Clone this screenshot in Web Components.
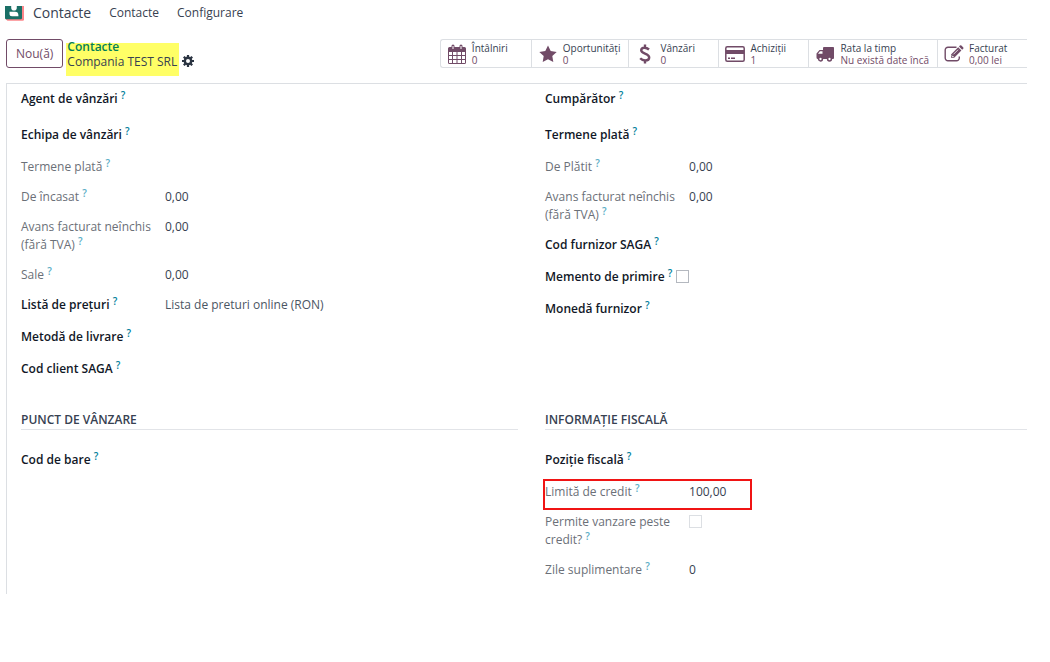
<!DOCTYPE html>
<html lang="ro">
<head>
<meta charset="utf-8">
<meta name="viewport" content="width=device-width, initial-scale=1">
<title>Contacte</title>
<style>
  body {
    margin: 0;
    background: #fff;
    color: #374151;
    font-family: "Open Sans", "Noto Sans", sans-serif;
    font-size: 12px;
    line-height: 18px;
  }
</style>
</head>
<body>
<contact-page>
  <app-navbar slot="nav" brand="Contacte">
    <a href="#contacte">Contacte</a>
    <a href="#configurare">Configurare</a>
  </app-navbar>

  <record-breadcrumb slot="control" parent="Contacte" current="Compania TEST SRL"></record-breadcrumb>
  <stat-bar slot="control">
    <stat-button icon="calendar" label="Întâlniri" value="0"></stat-button>
    <stat-button icon="star" label="Oportunități" value="0"></stat-button>
    <stat-button icon="dollar" label="Vânzări" value="0"></stat-button>
    <stat-button icon="card" label="Achiziții" value="1"></stat-button>
    <stat-button icon="truck" label="Rata la timp" value="Nu există date încă"></stat-button>
    <stat-button icon="edit" label="Facturat" value="0,00 lei"></stat-button>
  </stat-bar>

  <field-group>
    <form-field tall type="text" label="Agent de vânzări"></form-field>
    <form-field type="text" label="Echipa de vânzări"></form-field>
    <form-field label="Termene plată"></form-field>
    <form-field label="De încasat" value="0,00"></form-field>
    <form-field label="Avans facturat neînchis (fără TVA)" value="0,00"></form-field>
    <form-field label="Sale" value="0,00"></form-field>
    <form-field type="text" label="Listă de prețuri" value="Lista de preturi online (RON)"></form-field>
    <form-field type="text" label="Metodă de livrare"></form-field>
    <form-field type="text" label="Cod client SAGA"></form-field>
  </field-group>

  <field-group>
    <form-field tall type="text" label="Cumpărător"></form-field>
    <form-field type="text" label="Termene plată"></form-field>
    <form-field label="De Plătit" value="0,00"></form-field>
    <form-field label="Avans facturat neînchis (fără TVA)" value="0,00"></form-field>
    <form-field type="text" label="Cod furnizor SAGA"></form-field>
    <form-field inline type="checkbox" label="Memento de primire"></form-field>
    <form-field type="text" label="Monedă furnizor"></form-field>
  </field-group>

  <field-group heading="Punct de vânzare">
    <form-field type="text" label="Cod de bare"></form-field>
  </field-group>

  <field-group heading="Informație fiscală">
    <form-field type="text" label="Poziție fiscală"></form-field>
    <form-field marked label="Limită de credit" value="100,00"></form-field>
    <form-field disabled type="checkbox" label="Permite vanzare peste credit?"></form-field>
    <form-field label="Zile suplimentare" value="0"></form-field>
  </field-group>
</contact-page>

<script>
const ICONS = {
  calendar: `<svg viewBox="0 0 18 20" width="18" height="20">
    <path fill="currentColor" fill-rule="evenodd" d="M1.500 3H3.500V2a1.500 1.500 0 0 1 3 0v1h5V2a1.500 1.500 0 0 1 3 0v1h2A1.500 1.500 0 0 1 18 4.500v14a1.500 1.500 0 0 1-1.500 1.500h-15A1.500 1.500 0 0 1 0 18.500v-14A1.500 1.500 0 0 1 1.500 3zM1 8v3h3V8zm4 0v3h3.500V8zm4.500 0v3H13V8zM14 8v3h3V8zM1 12v3h3v-3zm4 0v3h3.500v-3zm4.500 0v3H13v-3zm4.500 0v3h3v-3zM1 16v3h3v-3zm4 0v3h3.500v-3zm4.500 0v3H13v-3zm4.500 0v3h3v-3z"/>
    <path stroke="#fff" stroke-width="1" d="M5 2v3M13 2v3"/></svg>`,
  star: `<svg viewBox="0 0 18 18" width="18" height="18">
    <path fill="currentColor" d="M9 .5l2.700 5.500 6 .9-4.400 4.200 1 6L9 14.300l-5.300 2.800 1-6L.3 6.900l6-.9z"/></svg>`,
  dollar: `<svg viewBox="0 0 12 20" width="12" height="20">
    <path fill="none" stroke="currentColor" stroke-width="2.400" d="M10 5.500C8.500 4.200 7 3.700 5.600 3.700 3.500 3.700 2.200 4.800 2.200 6.300c0 3.900 8 2.800 8 7.200 0 1.800-1.600 3-4 3-1.900 0-3.600-.7-5-2.200M6 .5v3.200M6 16.500v3"/></svg>`,
  card: `<svg viewBox="0 0 20 16" width="20" height="16">
    <rect x=".8" y=".8" width="18.400" height="14.400" rx="1.500" fill="none" stroke="currentColor" stroke-width="1.500"/>
    <path fill="currentColor" d="M1 4h18v4H1zM3 11.500h2V13H3zM6 11.500h4V13H6z"/></svg>`,
  truck: `<svg viewBox="0 0 18 16" width="18" height="16">
    <path fill="currentColor" fill-rule="evenodd" d="M8 1h9.200a.8.8 0 0 1 .8.8V12a1 1 0 0 1-1 1H8V13H2a1.500 1.500 0 0 1-1.500-1.500V7.500L3.500 4H7V2a1 1 0 0 1 1-1zM4 5.200L2 7.800h4.500V5.200z"/>
    <g fill="#fff" stroke="currentColor" stroke-width="1.500"><circle cx="4.500" cy="13" r="1.900"/><circle cx="13.500" cy="13" r="1.900"/></g></svg>`,
  edit: `<svg viewBox="0 0 20 18" width="20" height="18">
    <path fill="none" stroke="currentColor" stroke-width="1.400" d="M12.500 2.200H4A2.800 2.800 0 0 0 1.200 5v8A2.800 2.800 0 0 0 4 15.800h8.500a2.800 2.800 0 0 0 2.800-2.800v-1.500"/>
    <path fill="currentColor" d="M14.200 2.300l3.200 3.200-7.200 7.200H7V9.500zM15 1.500l.9-.9a1 1 0 0 1 1.500 0l1.700 1.700a1 1 0 0 1 0 1.500l-.9.9z"/>
    <path stroke="#fff" stroke-width=".8" d="M9.500 9.300l4.600-4.600M8 9.800v1.700h1.800"/></svg>`,
  gear: `<svg viewBox="0 0 12 12" width="12" height="12">
    <circle cx="6" cy="6" r="3.200" fill="none" stroke="currentColor" stroke-width="2.400"/>
    <path stroke="currentColor" stroke-width="2.200" d="M6 0v2.500M6 9.500V12M0 6h2.500M9.500 6H12M1.800 1.800l1.600 1.600M8.600 8.600l1.600 1.600M10.200 1.800L8.600 3.400M3.400 8.600l-1.600 1.600"/></svg>`,
  app: `<svg viewBox="0 0 20 15" width="20" height="15">
    <path fill="#fc868b" d="M16 0h3v13.500a1.300 1.300 0 0 1-1.300 1.300H2.500L.5 13z"/>
    <path fill="#1a6f66" d="M0 0h17v12a1.200 1.200 0 0 1-1.200 1.200H1.200A1.200 1.200 0 0 1 0 12z"/>
    <path fill="#fff" d="M6.200 0h5.600v1.800a2.800 2.800 0 0 1-5.600 0z"/>
    <path fill="#fff" d="M4.500 5.800H10a3.400 3.400 0 0 1 3.400 3.400v1H7a2.500 2.500 0 0 1-2.500-2.500z"/></svg>`
};

class AppNavbar extends HTMLElement {
  constructor() {
    super();
    this.attachShadow({ mode: 'open' });
  }

  connectedCallback() {
    this.shadowRoot.innerHTML = `
      <style>
        :host { display: block; }
        nav { display: flex; align-items: center; height: 26px; padding-left: 5px; color: #374151; }
        .brand { display: flex; align-items: center; gap: 8px; margin-right: 18px; font-size: 14px; color: inherit; text-decoration: none; }
        .menu { display: flex; gap: 18px; }
        ::slotted(a) { color: inherit; text-decoration: none; }
      </style>
      <nav>
        <a class="brand" href="#">${ICONS.app}<span>${this.getAttribute('brand')}</span></a>
        <div class="menu"><slot></slot></div>
      </nav>
    `;
  }
}

class RecordBreadcrumb extends HTMLElement {
  constructor() {
    super();
    this.attachShadow({ mode: 'open' });
  }

  connectedCallback() {
    this.shadowRoot.innerHTML = `
      <style>
        :host { display: flex; align-items: flex-start; gap: 3px; }
        button { font: inherit; cursor: pointer; }
        .new {
          height: 29px;
          padding: 0 9px;
          border: 1px solid #714b67;
          border-radius: 3px;
          background: #fff;
          color: #714b67;
          font-weight: 500;
        }
        .trail {
          margin-top: 4px;
          height: 33px;
          padding: 0 2px 0 1px;
          background: #ffff66;
          line-height: 15px;
        }
        .trail a { display: block; margin-top: -4px; color: #017e58; font-weight: 600; text-decoration: none; }
        .trail span { display: block; }
        .gear { display: flex; margin-top: 16px; padding: 0; border: 0; background: none; color: #2b3442; }
      </style>
      <button class="new" type="button">Nou(ă)</button>
      <div class="trail">
        <a href="#">${this.getAttribute('parent')}</a>
        <span>${this.getAttribute('current')}</span>
      </div>
      <button class="gear" type="button" aria-label="Acțiuni">${ICONS.gear}</button>
    `;
  }
}

class StatBar extends HTMLElement {
  constructor() {
    super();
    this.attachShadow({ mode: 'open' });
    this.shadowRoot.innerHTML = `
      <style>
        :host {
          display: flex;
          box-sizing: border-box;
          height: 29px;
          border: 1px solid #dcdfe3;
          border-right: 0;
          border-radius: 3px 0 0 3px;
        }
      </style>
      <slot></slot>
    `;
  }
}

class StatButton extends HTMLElement {
  constructor() {
    super();
    this.attachShadow({ mode: 'open' });
  }

  connectedCallback() {
    this.shadowRoot.innerHTML = `
      <style>
        :host { display: flex; min-width: 90px; box-sizing: border-box; }
        :host(:not(:first-child)) { border-left: 1px solid #dcdfe3; }
        button {
          display: flex;
          align-items: center;
          gap: 4px;
          width: 100%;
          padding: 0 8px 0 5px;
          border: 0;
          background: none;
          color: #714b67;
          font: inherit;
          font-size: 10px;
          line-height: 12px;
          text-align: left;
          white-space: nowrap;
          cursor: pointer;
        }
        .icon { display: flex; justify-content: center; width: 22px; }
        .text { display: flex; flex-direction: column; }
        .label { color: #374151; }
      </style>
      <button type="button">
        <span class="icon">${ICONS[this.getAttribute('icon')]}</span>
        <span class="text">
          <span class="label">${this.getAttribute('label')}</span>
          <span>${this.getAttribute('value')}</span>
        </span>
      </button>
    `;
  }
}

class FieldGroup extends HTMLElement {
  constructor() {
    super();
    this.attachShadow({ mode: 'open' });
  }

  connectedCallback() {
    const heading = this.getAttribute('heading');
    this.shadowRoot.innerHTML = `
      <style>
        :host { display: block; }
        h2 {
          margin: 0 0 21px;
          border-bottom: 1px solid #e2e4e8;
          color: #374151;
          font-size: 12px;
          font-weight: 600;
          text-transform: uppercase;
        }
        .fields { display: flex; flex-direction: column; gap: 12px; }
      </style>
      ${heading ? `<h2>${heading}</h2>` : ''}
      <div class="fields"><slot></slot></div>
    `;
  }
}

class FormField extends HTMLElement {
  constructor() {
    super();
    this.attachShadow({ mode: 'open' });
  }

  control() {
    const type = this.getAttribute('type');
    const value = this.getAttribute('value') || '';
    if (type === 'checkbox') {
      return `<input id="field" type="checkbox" ${this.hasAttribute('disabled') ? 'disabled' : ''}>`;
    }
    if (type === 'text') {
      return `<input id="field" type="text" value="${value}">`;
    }
    return `<output id="field">${value}</output>`;
  }

  connectedCallback() {
    this.shadowRoot.innerHTML = `
      <style>
        :host {
          display: grid;
          grid-template-columns: 140px 1fr;
          column-gap: 4px;
          align-items: start;
          position: relative;
        }
        :host([type]) { min-height: 20px; }
        :host([disabled]) { min-height: 0; }
        :host([tall]) { min-height: 24px; }
        :host([inline]) { display: flex; }
        label { color: #6b7078; font-weight: 500; }
        :host([type]:not([disabled])) label { color: #111827; font-weight: 600; }
        sup { color: #017e9b; font-size: 10px; line-height: 0; font-weight: 600; vertical-align: 4px; }
        :host(:not([type])) sup, :host([disabled]) sup { color: #5aaec6; }
        input[type="text"] {
          width: 100%;
          height: 18px;
          box-sizing: border-box;
          padding: 0;
          border: 0;
          outline: 0;
          background: none;
          color: #4b5563;
          font: inherit;
        }
        input[type="checkbox"] {
          appearance: none;
          box-sizing: border-box;
          width: 13px;
          height: 13px;
          margin: 2px 0 0;
          border: 1px solid #b4b8bf;
          background: #fff;
        }
        input[type="checkbox"]:disabled { border-color: #dcdfe3; }
        /* red frame drawn over the highlighted row */
        :host([marked])::after {
          content: "";
          position: absolute;
          top: -4px;
          left: -2px;
          width: 205px;
          height: 27px;
          border: 2px solid #f01414;
          pointer-events: none;
        }
      </style>
      <label for="field">${this.getAttribute('label')} <sup>?</sup></label>
      ${this.control()}
    `;
  }
}

class ContactPage extends HTMLElement {
  constructor() {
    super();
    this.attachShadow({ mode: 'open' });
    this.shadowRoot.innerHTML = `
      <style>
        :host { display: block; padding: 0 23px 0 0; }
        header {
          display: flex;
          justify-content: space-between;
          align-items: flex-start;
          margin-top: 13px;
          padding-left: 6px;
        }
        main {
          display: grid;
          grid-template-columns: 33fr 32fr;
          gap: 31px 27px;
          margin: 7px 0 0 6px;
          padding: 6px 0 15px 14px;
          border-top: 1px solid #dcdfe3;
          border-left: 1px solid #dcdfe3;
        }
      </style>
      <slot name="nav"></slot>
      <header><slot name="control"></slot></header>
      <main><slot></slot></main>
    `;
  }
}

customElements.define('app-navbar', AppNavbar);
customElements.define('record-breadcrumb', RecordBreadcrumb);
customElements.define('stat-bar', StatBar);
customElements.define('stat-button', StatButton);
customElements.define('field-group', FieldGroup);
customElements.define('form-field', FormField);
customElements.define('contact-page', ContactPage);
</script>
</body>
</html>
